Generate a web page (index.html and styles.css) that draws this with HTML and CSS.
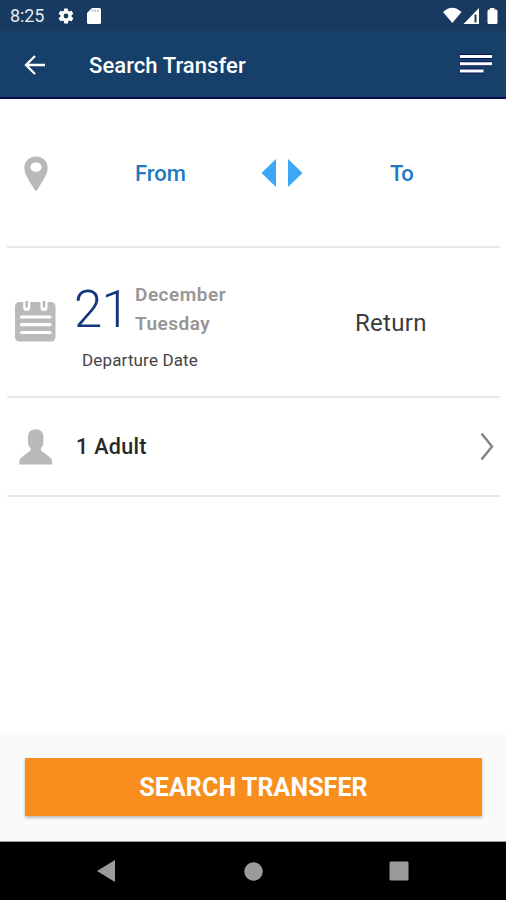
FILE: index.html
```html
<!DOCTYPE html>
<html lang="en">
<head>
<meta charset="utf-8">
<title>Search Transfer</title>
<link rel="stylesheet" href="styles.css">
</head>
<body>
<div class="screen">
  <div class="status">
    <span class="clock">8:25</span>
    <svg class="gear" width="18" height="18" viewBox="0 0 24 24"><path fill="#fff" d="M19.4 13a7.500 7.500 0 0 0 0-2l2.100-1.650c.2-.15.250-.42.120-.64l-2-3.460a.5.5 0 0 0-.6-.22l-2.500 1a7.300 7.300 0 0 0-1.700-.98l-.37-2.650A.5.5 0 0 0 14 2h-4a.5.5 0 0 0-.5.420l-.37 2.650c-.6.250-1.170.58-1.700.98l-2.500-1a.5.5 0 0 0-.6.220l-2 3.460c-.13.220-.07.490.12.640L4.600 11a7.500 7.500 0 0 0 0 2l-2.100 1.650a.5.5 0 0 0-.12.640l2 3.460c.12.220.39.300.6.220l2.500-1c.52.400 1.080.73 1.700.98l.37 2.650c.04.240.25.400.5.400h4c.25 0 .46-.18.500-.42l.37-2.650a7.300 7.300 0 0 0 1.700-.98l2.500 1c.23.090.49 0 .6-.22l2-3.460a.5.5 0 0 0-.12-.64zM12 15.200a3.200 3.200 0 1 1 0-6.400 3.200 3.200 0 0 1 0 6.400z"/></svg>
    <svg class="card" width="14" height="16" viewBox="0 0 14 16"><path fill="#fff" d="M5 0h7.500Q14 0 14 1.500v13q0 1.500-1.500 1.500h-11Q0 16 0 14.500V5z"/><path stroke="#a9b5c7" stroke-width="1.300" d="M5.500 1.500v2.500M8.200 1.500v2.500M10.900 1.500v2.500"/></svg>
    <svg class="signals" width="56" height="18" viewBox="0 0 56 18"><path fill="#fff" d="M0 5Q9.300-3.500 18.500 5L9.300 16zM20.500 17 36 1v16z"/><path fill="#183a60" d="M31.500 7.500h2v8h-2z"/><path fill="#fff" d="M47 1h4.500v1.500H53q1.500 0 1.500 1.500v11.500q0 1.500-1.500 1.500h-7q-1.500 0-1.500-1.500V4q0-1.500 1.500-1.500h1z"/></svg>
  </div>
  <header class="bar">
    <svg class="back" width="22" height="20" viewBox="0 0 22 20"><path d="M21 10H2.500M11 1 2 10l9 9" fill="none" stroke="#fff" stroke-width="2.300"/></svg>
    <h1>Search Transfer</h1>
    <svg class="menu" width="34" height="22" viewBox="0 0 34 22"><path d="M1 3.500h32M1 10.700h32M1 18h23.500" stroke="#0b1053" stroke-width="5"/><path d="M1 3.500h32M1 10.700h32M1 18h23.500" stroke="#fff" stroke-width="3"/></svg>
  </header>
  <main>
    <section class="row route">
      <svg class="pin" width="24" height="36" viewBox="0 0 24 36"><path fill="#b9b9b9" fill-rule="evenodd" d="M12 .5C5 .5.300 5.500.300 12c0 7 7 15.500 10.200 21.800q1.500 2 3 0C16.700 27.500 23.700 19 23.700 12 23.700 5.500 19 .5 12 .5zM12 6.500c3.300 0 5.500 2.100 5.500 4.700S15.300 15.800 12 15.800s-5.500-2-5.500-4.600S8.700 6.500 12 6.500z"/></svg>
      <span class="place from">From</span>
      <svg class="swap" width="42" height="28" viewBox="0 0 42 28"><path fill="#3aa8f7" d="M15 0v28L.5 14zM27 0v28l14.500-14z"/></svg>
      <span class="place to">To</span>
    </section>
    <section class="row dates">
      <svg class="calendar" width="41" height="42" viewBox="0 0 41 42"><rect y="2" width="40.500" height="39.500" rx="4.500" fill="#bababa"/><path d="M11.700 0v7.500M29 0v7.500" stroke="#fff" stroke-width="7" stroke-linecap="round"/><path d="M11.700 1v6.500M29 1v6.500" stroke="#bababa" stroke-width="2.600"/><path d="M6.500 17h28.500M6.500 24.700h28.500M6.500 32.500h28.500" stroke="#fff" stroke-width="3.200" stroke-linecap="round"/></svg>
      <div class="departure">
        <div class="date">
          <span class="day">21</span>
          <div class="names"><span class="month">December</span><span class="weekday">Tuesday</span></div>
        </div>
        <div class="caption">Departure Date</div>
      </div>
      <span class="return">Return</span>
    </section>
    <section class="row people">
      <svg class="person" width="34" height="36" viewBox="0 0 34 36"><path fill="#b9b9b9" d="M9 8.500C9 3 11.800.3 16.700.3S24.400 3 24.400 8.500v4.500c0 3-.6 4.500-2.400 6v2.500l8 6q3.200 2.500 3.200 5v3H.3v-3q0-2.500 3.200-5l8-6V19C9.700 17.500 9 16 9 13z"/></svg>
      <span class="adult">1 Adult</span>
      <svg class="chevron" width="14" height="30" viewBox="0 0 14 30"><path d="M1.500 1.500 12 14.500 1.500 27.500" fill="none" stroke="#838383" stroke-width="2.400"/></svg>
    </section>
  </main>
  <footer><button class="search">SEARCH TRANSFER</button></footer>
  <nav>
    <svg class="nav-back" width="18" height="22" viewBox="0 0 18 22"><path fill="#9b9b9b" d="M18 0v22L0 11z"/></svg>
    <svg class="nav-home" width="19" height="19" viewBox="0 0 19 19"><circle cx="9.500" cy="9.500" r="9.300" fill="#9b9b9b"/></svg>
    <svg class="nav-recent" width="20" height="20" viewBox="0 0 20 20"><rect x=".5" y=".5" width="19" height="19" rx="1.500" fill="#9b9b9b"/></svg>
  </nav>
</div>
</body>
</html>
```

FILE: styles.css
```css
* { box-sizing: border-box; }
body { margin: 0; font-family: Roboto, "Liberation Sans", sans-serif; background: #fff; }
svg { display: block; flex: none; }
span { white-space: nowrap; }
.screen { width: 506px; height: 900px; display: flex; flex-direction: column; overflow: hidden; }
.status { height: 30px; flex: none; background: #183a60; display: flex; align-items: center; padding: 1px 7px 0 10px; }
.clock { width: 47px; color: #e4e9f2; font-size: 18px; line-height: 20px; letter-spacing: -.15px; }
.card { margin-left: 12px; }
.signals { margin-left: auto; }
.bar { height: 69px; flex: none; background: #164069; border-bottom: 2px solid #0b0c50; display: flex; align-items: center; padding: 1px 13px 0 24px; }
.back { margin-top: 1px; }
.bar h1 { margin: 4px 0 0 43px; color: #fff; font-size: 22px; font-weight: 500; line-height: 26px; letter-spacing: .07px; white-space: nowrap; }
.menu { margin-left: auto; margin-top: -1px; }
main { flex: 1; padding: 0 6px 0 7px; }
.row { display: flex; border-bottom: 2px solid #e9e9e9; }
.route { height: 149px; align-items: center; padding: 1px 0 0 17px; }
.pin { margin-top: 1px; }
.place { color: #2279c3; font-size: 22px; font-weight: 500; line-height: 26px; margin-top: 2px; }
.from { margin-left: 87px; width: 126px; }
.to { margin-left: 87px; letter-spacing: -.7px; }
.dates { height: 150px; padding-left: 7px; }
.calendar { margin: 52px 0 0 1px; }
.departure { margin-left: 18px; width: 282px; padding-top: 31px; }
.date { display: flex; height: 62px; }
.day { width: 61px; color: #143580; font-size: 51px; font-weight: 350; line-height: 62px; letter-spacing: -.7px; }
.names { display: flex; flex-direction: column; color: #969696; font-size: 19px; font-weight: 600; line-height: 29px; letter-spacing: .5px; padding-top: 1px; }
.caption { margin: 8px 0 0 8px; color: #444; font-size: 17px; line-height: 22px; letter-spacing: .15px; }
.return { color: #3b3b3b; font-size: 24px; line-height: 30px; letter-spacing: .3px; margin-top: 60px; margin-left: -1px; }
.people { height: 99px; align-items: center; padding: 0 6px 0 12px; }
.adult { margin: 1px 0 0 23px; color: #292929; font-size: 21.500px; font-weight: 500; line-height: 26px; letter-spacing: .3px; }
.chevron { margin-left: auto; }
footer { height: 110px; flex: none; background: #fafafa; border-bottom: 1px solid #999; padding: 26px 24px 0 25px; }
.search { display: block; width: 100%; height: 58px; border: 0; padding: 2px 0 0; background: #f78e1e; box-shadow: 0 2px 3px rgba(0,0,0,.25); color: #fff; font: 700 25px/28px Roboto, sans-serif; letter-spacing: .1px; }
nav { height: 58px; flex: none; background: #000; display: flex; align-items: center; padding: 0 97px; justify-content: space-between; }
.nav-home { margin-left: 2px; }
```
